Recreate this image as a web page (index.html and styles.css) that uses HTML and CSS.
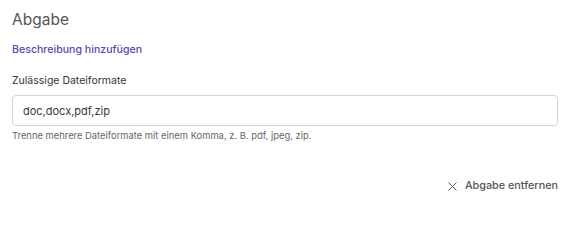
FILE: index.html
```html
<!DOCTYPE html>
<html lang="de">
<head>
<meta charset="utf-8">
<link rel="stylesheet" href="styles.css">
</head>
<body>
<div class="panel">
  <h2 class="title">Abgabe</h2>
  <a class="link" href="#">Beschreibung hinzufügen</a>
  <label class="label" for="formats">Zulässige Dateiformate</label>
  <input class="input" id="formats" type="text" value="doc,docx,pdf,zip">
  <p class="hint">Trenne mehrere Dateiformate mit einem Komma, z. B. pdf, jpeg, zip.</p>
  <div class="actions">
    <button class="remove" type="button">
      <svg class="x" width="9" height="9" viewBox="0 0 9 9" aria-hidden="true"><path d="M0.5 0.5L8.5 8.5M8.5 0.5L0.5 8.5" stroke="#5a5a5a" stroke-width="1" fill="none"/></svg>
      <span>Abgabe entfernen</span>
    </button>
  </div>
</div>
</body>
</html>
```
FILE: styles.css
```css
* { box-sizing: border-box; }
html, body { margin: 0; padding: 0; background: #fff; }
body { font-family: Inter, "Noto Sans", "Liberation Sans", sans-serif; }
.panel {
  width: 570px;
  padding: 10px 12px 0 12px;
  display: flex;
  flex-direction: column;
  align-items: flex-start;
}
.title {
  margin: 0;
  font-size: 15.5px;
  line-height: 20px;
  font-weight: 400;
  color: #555;
}
.link {
  margin-top: 13px;
  font-size: 10.6px;
  line-height: 14px;
  font-weight: 500;
  color: #5b48ad;
  text-decoration: none;
}
.label {
  margin-top: 17px;
  font-size: 10.5px;
  line-height: 14px;
  color: #333;
}
.input {
  margin-top: 7px;
  width: 100%;
  height: 31px;
  border: 1px solid #d4d4d4;
  border-radius: 4px;
  padding: 0 10px;
  font-family: inherit;
  font-size: 11px;
  color: #3a3a3a;
  background: #fff;
  outline: none;
}
.hint {
  margin: 4px 0 0 0;
  font-size: 9.4px;
  line-height: 12px;
  color: #666;
}
.actions {
  margin-top: 37px;
  width: 100%;
  display: flex;
  justify-content: flex-end;
}
.remove {
  display: flex;
  align-items: center;
  gap: 8px;
  padding: 0;
  border: none;
  background: none;
  font-family: inherit;
  font-size: 10.8px;
  line-height: 14px;
  font-weight: 500;
  color: #555;
  cursor: pointer;
}
.x { display: block; }
```
